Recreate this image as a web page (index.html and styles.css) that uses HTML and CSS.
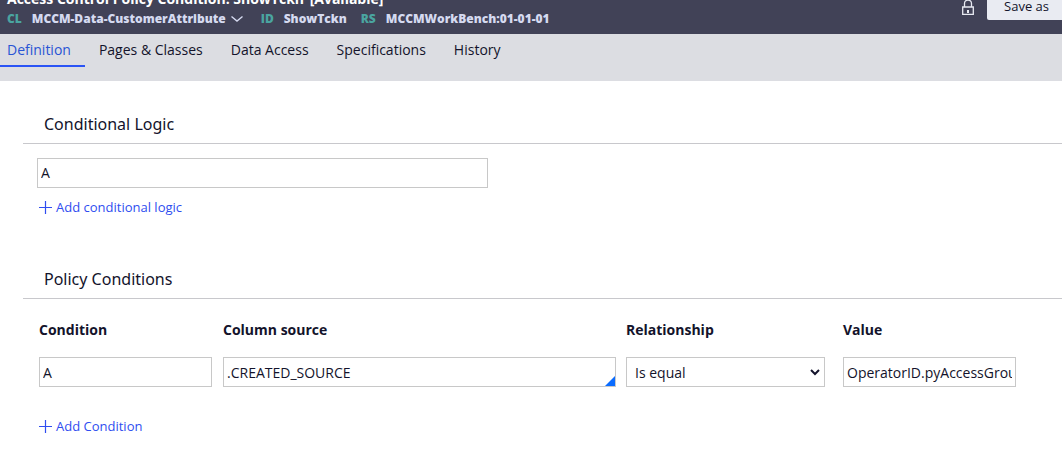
FILE: index.html
```html
<!DOCTYPE html>
<html lang="en">
<head>
<meta charset="utf-8">
<title>Access Control Policy Condition: ShowTckn</title>
<link rel="stylesheet" href="styles.css">
</head>
<body>
<header class="rule-header">
  <div class="rule-info">
    <h1 class="rule-title">Access Control Policy Condition: ShowTckn <span class="status">[Available]</span></h1>
    <div class="rule-keys">
      <span class="key">CL</span>
      <button class="class-picker" type="button">MCCM-Data-CustomerAttribute
        <svg class="chevron" viewBox="0 0 12 8" aria-hidden="true"><path d="M.5 1.500 6 6 11.500 1.500"/></svg>
      </button>
      <span class="key key-id">ID</span><span class="key-value">ShowTckn</span>
      <span class="key key-rs">RS</span><span class="key-value">MCCMWorkBench:01-01-01</span>
    </div>
  </div>
  <div class="rule-actions">
    <svg class="lock" viewBox="0 0 12 18" aria-hidden="true"><path d="M2.500 9V5.500a3.500 3.500 0 0 1 7 0V9"/><path d="M.7 9h10.600v7.300H.7z"/><path class="keyhole" d="M5 12h2v3H5z"/></svg>
    <button class="save-button" type="button">Save as</button>
  </div>
</header>
<nav class="tabs">
  <a class="tab tab-active" href="#definition">Definition</a>
  <a class="tab" href="#pages">Pages &amp; Classes</a>
  <a class="tab" href="#access">Data Access</a>
  <a class="tab" href="#specifications">Specifications</a>
  <a class="tab" href="#history">History</a>
</nav>
<main class="content" id="definition">
  <section class="section">
    <h2 class="section-title" id="logic-title">Conditional Logic</h2>
    <div class="logic-body">
      <input class="field logic-field" type="text" value="A" aria-labelledby="logic-title">
    </div>
    <button class="add-link" type="button"><svg class="plus" viewBox="0 0 13 13" aria-hidden="true"><path d="M6.500 0v13M0 6.500h13"/></svg>Add conditional logic</button>
  </section>
  <section class="section">
    <h2 class="section-title">Policy Conditions</h2>
    <table class="conditions">
      <colgroup><col class="col-condition"><col><col class="col-relation"><col class="col-value"></colgroup>
      <thead>
        <tr><th id="h-cond">Condition</th><th id="h-source">Column source</th><th id="h-rel">Relationship</th><th id="h-value">Value</th></tr>
      </thead>
      <tbody>
        <tr>
          <td class="cell-condition"><input class="field" type="text" value="A" aria-labelledby="h-cond"></td>
          <td><div class="source"><input class="field" type="text" value=".CREATED_SOURCE" aria-labelledby="h-source"></div></td>
          <td class="cell-relation"><div class="relation"><select class="field relation-select" aria-labelledby="h-rel"><option>Is equal</option></select><svg class="caret" viewBox="0 0 10 7" aria-hidden="true"><path d="M1 1 5 5 9 1"/></svg></div></td>
          <td class="cell-value"><input class="field" type="text" value="OperatorID.pyAccessGroup" aria-labelledby="h-value"></td>
        </tr>
      </tbody>
    </table>
    <button class="add-link" type="button"><svg class="plus" viewBox="0 0 13 13" aria-hidden="true"><path d="M6.500 0v13M0 6.500h13"/></svg>Add Condition</button>
  </section>
</main>
</body>
</html>
```
FILE: styles.css
```css
* { box-sizing: border-box; }

body {
  margin: 0;
  background: #fff;
  color: #13132b;
  font: 14px/20px "Open Sans", sans-serif;
  overflow: hidden;
}

button, input, select { font: inherit; color: inherit; }
button { border: 0; padding: 0; background: none; cursor: pointer; }

/* Header bar, scrolled so that its upper part is cut off */
.rule-header {
  display: flex;
  justify-content: space-between;
  align-items: flex-end;
  height: 34px;
  overflow: hidden;
  background: #414257;
}
.rule-info { padding: 0 0 5px 7px; }
.rule-title {
  margin: 0;
  color: #fff;
  font-size: 14px;
  line-height: 20px;
  font-weight: 700;
}
.status { margin-left: 2px; }
.rule-keys {
  display: flex;
  align-items: center;
  color: #d5daf0;
  font-size: 12px;
  line-height: 20px;
  font-weight: 800;
}
.key { color: #4aa5a0; margin-right: 10px; }
.key-id { margin-left: 18px; }
.key-rs { margin-left: 14px; }
.class-picker { display: flex; align-items: center; gap: 5px; line-height: 20px; }
.chevron { width: 12px; height: 8px; fill: none; stroke: #d5daf0; stroke-width: 1.4; }

.rule-actions {
  display: flex;
  align-items: flex-end;
  gap: 13px;
  margin-right: -4px;
  padding-bottom: 14px;
}
.lock { width: 12px; height: 18px; margin-bottom: 4px; fill: none; stroke: #e8eaf2; stroke-width: 1.3; }
.lock .keyhole { fill: #e8eaf2; stroke: none; }
.save-button {
  height: 28px;
  padding: 0 17px;
  border-radius: 2px;
  background: #e9ebf2;
  font-size: 13px;
  white-space: nowrap;
}

.tabs {
  display: flex;
  gap: 7px;
  height: 47px;
  align-items: flex-start;
  background: #dcdde2;
}
.tab {
  padding: 6px 14px 5px 7px;
  border-bottom: 2px solid transparent;
  color: inherit;
  text-decoration: none;
  white-space: nowrap;
}
.tab-active { border-color: #2b54f5; color: #2854d4; }

.content { padding: 29px 0 0 23px; }
.section { margin-bottom: 48px; }
.section-title {
  margin: 0;
  padding: 2px 21px 7px;
  border-bottom: 1px solid #c8c8cc;
  font-family: "Noto Sans", "Open Sans", sans-serif;
  font-size: 16px;
  line-height: 24px;
  font-weight: 400;
}

.field {
  display: block;
  width: 100%;
  height: 30px;
  padding: 0 3px;
  border: 1px solid #c8c8c8;
  border-radius: 0;
  background: #fff;
  outline: 0;
}
.logic-body { padding: 14px 14px 0; }
.logic-field { max-width: 451px; padding-bottom: 2px; }

.add-link {
  display: flex;
  align-items: center;
  gap: 4px;
  margin: 9px 0 0 16px;
  color: #2f4df0;
  font-size: 13px;
  line-height: 20px;
}
.plus { width: 13px; height: 13px; fill: none; stroke: #2f4df0; stroke-width: 1.2; }

.conditions {
  width: calc(100% - 62px);
  margin: 21px 46px 29px 16px;
  border-collapse: collapse;
  table-layout: fixed;
}
.col-condition { width: 184px; }
.col-relation { width: 217px; }
.col-value { width: 173px; }
.conditions th { padding: 0 0 17px; text-align: left; font-weight: 700; }
.conditions td { padding: 0 10px 0 0; }
.conditions .cell-condition { padding-right: 11px; }
.conditions .cell-relation { padding-right: 18px; }
.conditions .cell-value { padding-right: 0; }

.source { position: relative; }
.source::after {
  content: "";
  position: absolute;
  right: 1px;
  bottom: 1px;
  border-style: solid;
  border-width: 0 0 10px 10px;
  border-color: transparent transparent #0a6cff;
}
.relation { position: relative; }
.relation-select { appearance: none; padding: 1px 24px 0 8px; }
.caret {
  position: absolute;
  right: 5px;
  top: 12px;
  width: 10px;
  height: 7px;
  fill: none;
  stroke: #13132b;
  stroke-width: 2;
  pointer-events: none;
}
```
